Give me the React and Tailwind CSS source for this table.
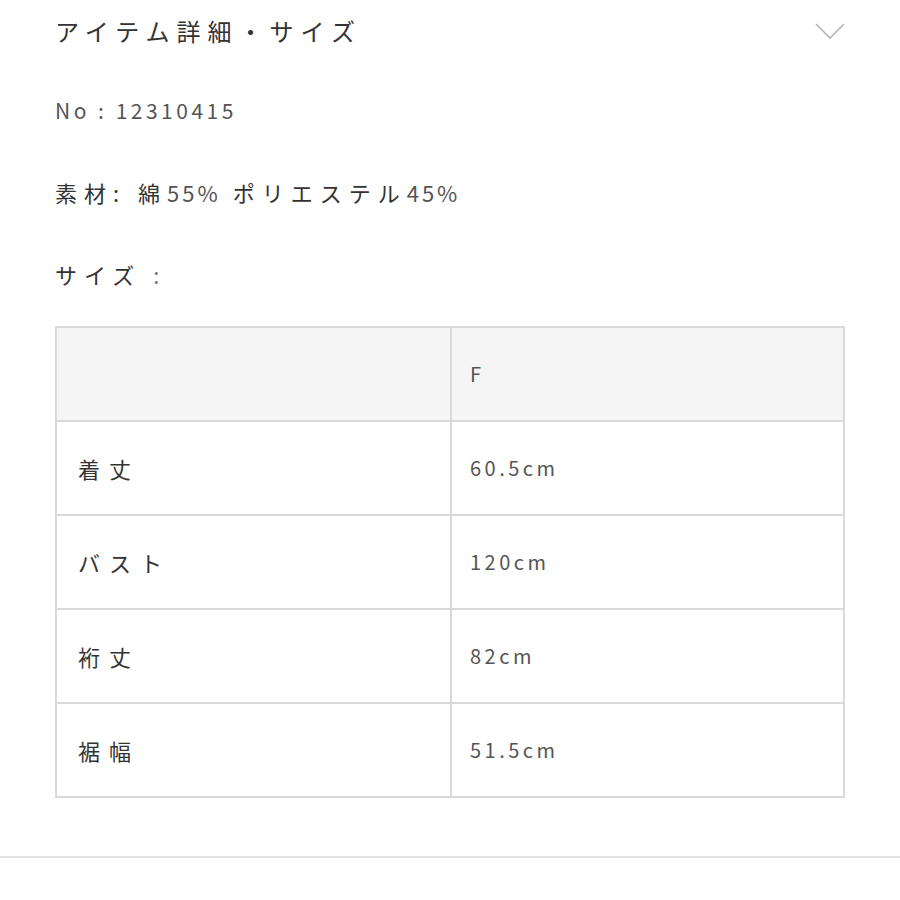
const rows = [
  ['着丈', '60.5cm'],
  ['バスト', '120cm'],
  ['裄丈', '82cm'],
  ['裾幅', '51.5cm'],
];

const ChevronDown = () => (
  <svg width="32" height="20" viewBox="0 0 32 20" fill="none" stroke="#b5b5b5" strokeWidth="1.6">
    <path d="M2 3 L16 17 L30 3" />
  </svg>
);

export default function App() {
  return (
    <div className="w-[900px] h-[900px] bg-white text-[#333] font-['Noto_Sans_CJK_JP',sans-serif]">
      <div className="flex items-center justify-between pl-[55px] pr-[54px] pt-[13px]">
        <h2 className="text-[24px] leading-[36px] tracking-[7px]">アイテム詳細・サイズ</h2>
        <ChevronDown />
      </div>

      <div className="pl-[55px] pr-[55px]">
        <p className="mt-[46px] text-[21px] leading-[30px] tracking-[3.5px] text-[#555]">No : 12310415</p>
        <p className="mt-[52px] text-[22px] leading-[30px] tracking-[7px]">
          素材: 綿<span className="tracking-[3px] text-[#555]">55%</span> ポリエステル<span className="tracking-[3px] text-[#555]">45%</span>
        </p>
        <p className="mt-[52px] text-[22px] leading-[30px] tracking-[7px]">
          サイズ <span className="text-[#777]">:</span>
        </p>

        <table className="mt-[37px] w-[790px] border-collapse border-2 border-[#d9d9d9] table-fixed">
          <tbody>
            <tr className="h-[94px] bg-[#f5f5f5]">
              <td className="w-[395px] border-2 border-[#d9d9d9]"></td>
              <td className="border-2 border-[#d9d9d9] pl-[18px] text-[20px] text-[#555]">F</td>
            </tr>
            {rows.map(([label, value]) => (
              <tr key={label} className="h-[94px]">
                <td className="border-2 border-[#d9d9d9] pl-[21px] text-[22px] tracking-[9px]">{label}</td>
                <td className="border-2 border-[#d9d9d9] pl-[18px] text-[20px] tracking-[3.5px] text-[#555]">{value}</td>
              </tr>
            ))}
          </tbody>
        </table>
      </div>

      <div className="mt-[58px] h-[2px] bg-[#e2e2e2]" />
    </div>
  );
}
